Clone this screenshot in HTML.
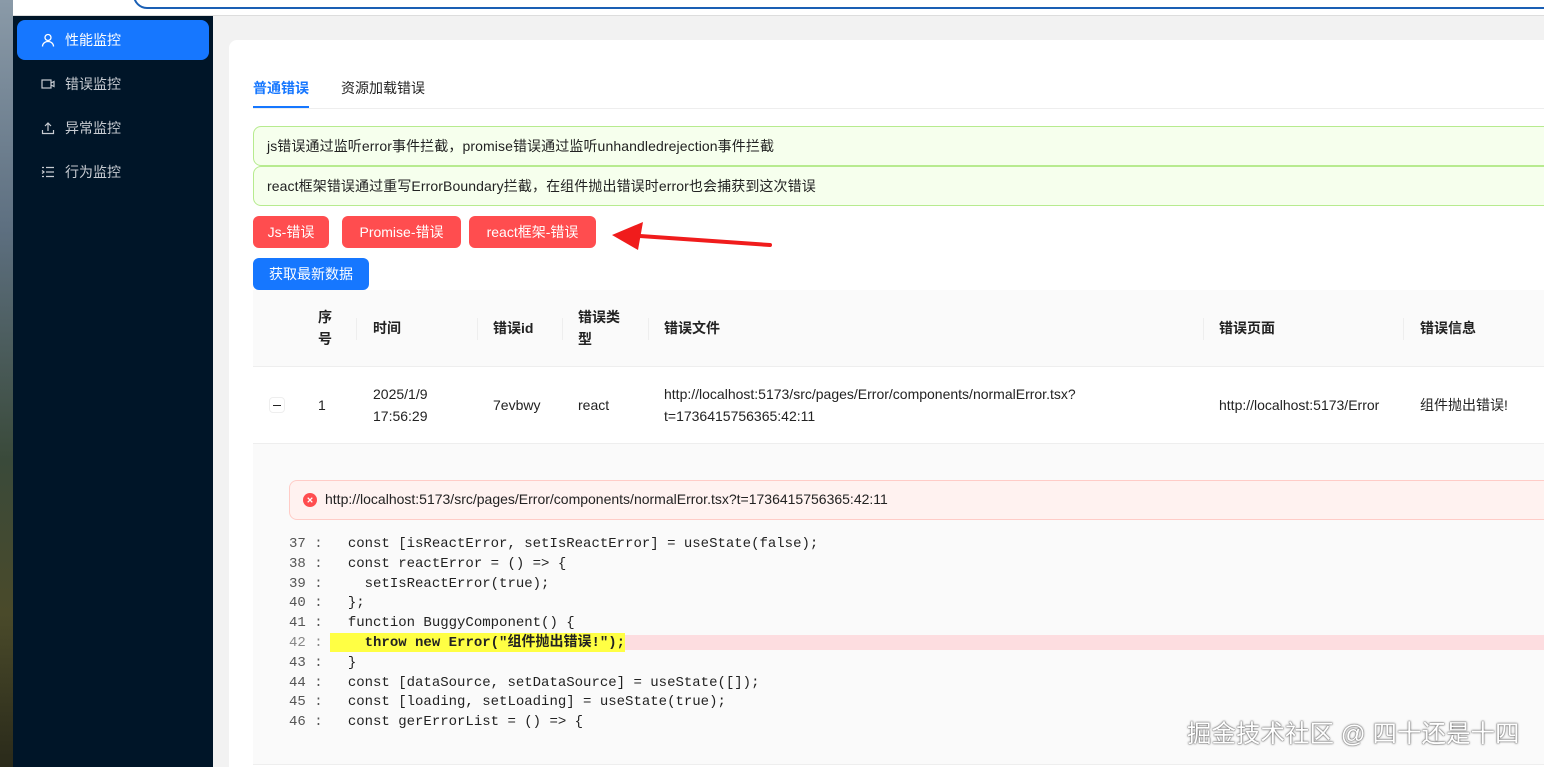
<!DOCTYPE html>
<html><head><meta charset="utf-8"><style>
*{margin:0;padding:0;box-sizing:border-box}
html,body{width:1544px;height:767px;overflow:hidden}
body{background:#f2f2f2;font-family:"Liberation Sans","Noto Sans CJK SC",sans-serif;font-size:14px;color:#222;position:relative}
.abs{position:absolute}
.photo{left:0;top:0;width:13px;height:767px;background:linear-gradient(#8a9aa8,#5d6f80 30%,#3a4a3a 60%,#4a4a2a 80%,#2a2a1a)}
.topbar{left:13px;top:0;width:1531px;height:16px;background:#fff;border-bottom:1px solid #ddd}
.addr{left:133px;top:-20px;width:1500px;height:29px;border:2px solid #1a5fb4;border-radius:14px;background:#fff}
.side{left:13px;top:16px;width:200px;height:751px;background:#001528}
.mi{position:absolute;left:4px;width:192px;height:40px;border-radius:8px;color:#c8ccd2;font-size:14px;line-height:40px;padding-left:48px}
.mi.on{background:#1677ff;color:#fff}
.mi svg{position:absolute;left:24px;top:13px}
.card{left:229px;top:40px;width:1330px;height:727px;background:#fff;border-radius:8px 8px 0 0}
.tab{top:78px;font-size:14px}
.alert{left:253px;width:1300px;height:40px;background:#f6ffed;border:1px solid #b7eb8f;border-radius:8px;padding-left:13px;line-height:38px;font-size:14px;color:#222;letter-spacing:0.1px}
.btn{top:216px;height:32px;border-radius:6px;background:#ff4d4f;color:#fff;line-height:32px;text-align:center;font-size:14px}
.th{top:290px;left:253px;width:1300px;height:77px;background:#fafafa;border-bottom:1px solid #eee}
.t{position:absolute;font-size:14px;line-height:22px}
.b{font-weight:bold}
.sep{position:absolute;width:1px;height:22px;background:#eee;top:28px}
.exp{left:253px;top:444px;width:1300px;height:321px;background:#fafafa;border-bottom:1px solid #eee}
.ealert{left:289px;top:480px;width:1270px;height:40px;background:#fff2f0;border:1px solid #ffccc7;border-radius:8px}
pre{font-family:"Liberation Mono","DejaVu Sans Mono","Noto Sans CJK SC",monospace;font-size:14px;line-height:19.8px;color:#222}
.ln{color:#555}
</style></head><body>
<div class="abs photo"></div>
<div class="abs topbar"></div>
<div class="abs addr"></div>
<div class="abs side">
 <div class="mi on" style="top:4px"><svg width="14" height="14" viewBox="0 0 14 14" fill="none" stroke="#fff" stroke-width="1.3"><circle cx="7" cy="4.5" r="3"/><path d="M1.5 13.5c0-3 2.5-5 5.5-5s5.5 2 5.5 5"/></svg>性能监控</div>
 <div class="mi" style="top:48px"><svg width="14" height="14" viewBox="0 0 14 14" fill="none" stroke="#c8ccd2" stroke-width="1.2"><rect x="1" y="3" width="9" height="8"/><path d="M10 6l3-1.5v5L10 8"/></svg>错误监控</div>
 <div class="mi" style="top:92px"><svg width="14" height="14" viewBox="0 0 14 14" fill="none" stroke="#c8ccd2" stroke-width="1.2"><path d="M7 10V2M4 5l3-3 3 3M1.5 9v3.5h11V9"/></svg>异常监控</div>
 <div class="mi" style="top:136px"><svg width="14" height="14" viewBox="0 0 14 14" fill="none" stroke="#c8ccd2" stroke-width="1.2"><path d="M5 2.5h8M5 7h8M5 11.5h8M1 2.5h2M1 11.5h2M1 5.5l2 1.5-2 1.5"/></svg>行为监控</div>
</div>
<div class="abs card"></div>
<div class="abs tab" style="left:253px;color:#1677ff;font-weight:bold">普通错误</div>
<div class="abs" style="left:253px;top:106px;width:56px;height:2px;background:#1677ff"></div>
<div class="abs tab" style="left:341px">资源加载错误</div>
<div class="abs" style="left:253px;top:108px;width:1300px;height:1px;background:#eee"></div>
<div class="abs alert" style="top:126px">js错误通过监听error事件拦截，promise错误通过监听unhandledrejection事件拦截</div>
<div class="abs alert" style="top:166px">react框架错误通过重写ErrorBoundary拦截，在组件抛出错误时error也会捕获到这次错误</div>
<div class="abs btn" style="left:253px;width:76px">Js-错误</div>
<div class="abs btn" style="left:342px;width:119px">Promise-错误</div>
<div class="abs btn" style="left:469px;width:127px">react框架-错误</div>
<svg class="abs" style="left:605px;top:218px" width="170" height="40" viewBox="0 0 170 40"><path d="M165 27L35 18" stroke="#f01c1c" stroke-width="4" stroke-linecap="round"/><path d="M7 17L38 4L33 32Z" fill="#f01c1c"/></svg>
<div class="abs btn" style="left:253px;top:258px;width:116px;background:#1677ff">获取最新数据</div>
<div class="abs th">
 <div class="t b" style="left:65px;top:16px;width:16px">序号</div>
 <div class="sep" style="left:103px"></div>
 <div class="t b" style="left:120px;top:27px">时间</div>
 <div class="sep" style="left:224px"></div>
 <div class="t b" style="left:240px;top:27px">错误id</div>
 <div class="sep" style="left:309px"></div>
 <div class="t b" style="left:325px;top:16px;width:44px">错误类型</div>
 <div class="sep" style="left:395px"></div>
 <div class="t b" style="left:411px;top:27px">错误文件</div>
 <div class="sep" style="left:950px"></div>
 <div class="t b" style="left:966px;top:27px">错误页面</div>
 <div class="sep" style="left:1150px"></div>
 <div class="t b" style="left:1167px;top:27px">错误信息</div>
</div>
<div class="abs" style="left:253px;top:367px;width:1300px;height:77px;border-bottom:1px solid #eee">
 <div class="abs" style="left:16px;top:30px;width:16px;height:16px;border:1px solid #eee;border-radius:4px;background:#fff"><div style="position:absolute;left:3px;top:7px;width:8px;height:1px;background:#222"></div></div>
 <div class="t" style="left:65px;top:27px">1</div>
 <div class="t" style="left:120px;top:16px">2025/1/9<br>17:56:29</div>
 <div class="t" style="left:240px;top:27px">7evbwy</div>
 <div class="t" style="left:325px;top:27px">react</div>
 <div class="t" style="left:411px;top:16px">http://localhost:5173/src/pages/Error/components/normalError.tsx?<br>t=1736415756365:42:11</div>
 <div class="t" style="left:966px;top:27px">http://localhost:5173/Error</div>
 <div class="t" style="left:1167px;top:27px">组件抛出错误!</div>
</div>
<div class="abs exp"></div>
<div class="abs ealert"><svg style="position:absolute;left:13px;top:12px" width="14" height="14"><circle cx="7" cy="7" r="7" fill="#ff4d4f"/><path d="M4.7 4.7l4.6 4.6M9.3 4.7l-4.6 4.6" stroke="#fff" stroke-width="1.3"/></svg><span style="position:absolute;left:35px;top:10px">http://localhost:5173/src/pages/Error/components/normalError.tsx?t=1736415756365:42:11</span></div>
<div class="abs" style="left:330px;top:633px;width:295px;height:19px;background:#ffff44"></div>
<div class="abs" style="left:625px;top:635px;width:930px;height:15px;background:#fddde0"></div>
<pre class="abs" style="left:289px;top:535px"><span class="ln">37 :</span>   const [isReactError, setIsReactError] = useState(false);
<span class="ln">38 :</span>   const reactError = () =&gt; {
<span class="ln">39 :</span>     setIsReactError(true);
<span class="ln">40 :</span>   };
<span class="ln">41 :</span>   function BuggyComponent() {
<span class="ln" style="color:#888">42 :</span>     <b>throw new Error("组件抛出错误!");</b>
<span class="ln">43 :</span>   }
<span class="ln">44 :</span>   const [dataSource, setDataSource] = useState([]);
<span class="ln">45 :</span>   const [loading, setLoading] = useState(true);
<span class="ln">46 :</span>   const gerErrorList = () =&gt; {</pre>
<div class="abs" style="left:1187px;top:715px;font-size:24.5px;color:#fff;white-space:nowrap;text-shadow:0 0 2px #555,0 0 1px #333">掘金技术社区 @ 四十还是十四</div>
</body></html>
